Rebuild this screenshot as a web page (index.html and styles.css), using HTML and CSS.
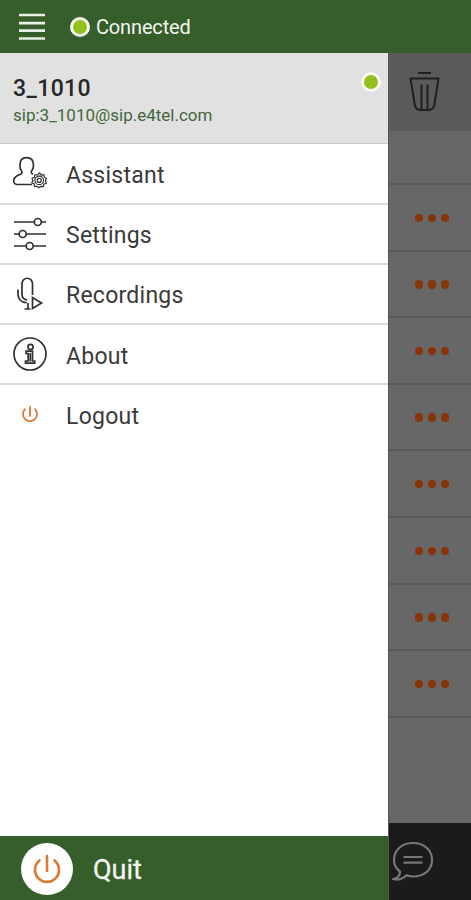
FILE: index.html
```html
<!DOCTYPE html>
<html lang="en">
<head>
<meta charset="utf-8">
<title>Menu</title>
<link rel="stylesheet" href="styles.css">
</head>
<body>
<div class="app">
  <header class="topbar">
    <svg class="burger" width="28" height="28" viewBox="0 0 28 28"><path d="M1 2h26M1 10.200h26M1 17.700h26M1 25.500h26"/></svg>
    <span class="status-dot"></span>
    <span class="status">Connected</span>
  </header>
  <div class="body">
    <aside class="drawer">
      <section class="account">
        <div>
          <h1 class="name">3_1010</h1>
          <p class="address">sip:3_1010@sip.e4tel.com</p>
        </div>
        <span class="presence"></span>
      </section>
      <nav class="menu">
        <a class="item">
          <svg class="icon" width="34" height="34" viewBox="0 0 34 34"><path d="M19 28.500H4C.7 28 0 25.500 1.200 22.700 2.300 20.200 4.500 19.500 7.500 18.200 9 17.500 9.300 16.500 8.600 15 6.900 13.300 6.800 12 6.900 9 7 4.300 9.500 1.700 13.500 1.700s6.900 2.600 7 7.300c.1 3-.4 4.300-1.900 6-.7 1.600-.2 2.600 1.500 3.300"/><path class="fine" d="m26.500 17 1.800 2 2.500-.4.600 2.600 2 1.300-1 2.200 1 2.400-2.500 1-.7 2.500-2.400-.2-1.900 1.400-1.800-1.500-2.500.1-.5-2.400-2.300-1.200 1.200-2.200-1-2.300 2.400-1.100.6-2.400 2.500.2z"/><circle class="fine" cx="26.200" cy="24.400" r="4.300"/><circle class="fine" cx="26.200" cy="24.400" r="2"/></svg>
          <span>Assistant</span>
        </a>
        <a class="item">
          <svg class="icon" width="34" height="34" viewBox="0 0 34 34"><path d="M1 5h20M28.500 5H33M1 17h5M13 17h20M1 29h12.500M20.500 29H33"/><circle cx="24.800" cy="5" r="3.500"/><circle cx="9.700" cy="17" r="3.500"/><circle cx="16.700" cy="29" r="3.500"/></svg>
          <span>Settings</span>
        </a>
        <a class="item">
          <svg class="icon" width="34" height="34" viewBox="0 0 34 34"><path d="M19.500 18V6.500a5 5 0 0 0-10.500 0v11c0 3 2 5 5.200 5.500"/><path d="M5 12.500V17c0 5 3.200 8.500 8.700 8.700M15 26v6M11.500 32h6M19.500 20.500v11l9-5.500z"/></svg>
          <span>Recordings</span>
        </a>
        <a class="item">
          <svg class="icon" width="34" height="34" viewBox="0 0 34 34"><circle cx="17" cy="17" r="16"/><circle cx="17.500" cy="10" r="2.600"/><path d="M13 14.200h6.500V24h2.200v2.200H12.500V24h2.700v-7.500H13zM17.300 16v8.500"/></svg>
          <span>About</span>
        </a>
        <a class="item">
          <svg class="icon power" width="34" height="34" viewBox="0 0 34 34"><path d="M17 9v9M12 11.200a7 7 0 1 0 10 0"/></svg>
          <span>Logout</span>
        </a>
      </nav>
      <footer class="quit">
        <span class="quit-badge"><svg class="power" width="30" height="30" viewBox="0 0 30 30"><path d="M15 2v15M7.500 6.500a12 12 0 1 0 15 0"/></svg></span>
        <span class="quit-label">Quit</span>
      </footer>
    </aside>
    <main class="history">
      <div class="tools">
        <svg width="32" height="42" viewBox="0 0 32 42"><path d="M10 2h13M2.500 7.500h28L26.300 34c-.7 3.300-3 5-6 5h-7.500c-3 0-5.400-1.700-6-5zM13.500 13.500V38M19.500 13.500V38"/></svg>
      </div>
      <div class="tabs"></div>
      <div class="call"><i></i><i></i><i></i></div>
      <div class="call"><i></i><i></i><i></i></div>
      <div class="call"><i></i><i></i><i></i></div>
      <div class="call"><i></i><i></i><i></i></div>
      <div class="call"><i></i><i></i><i></i></div>
      <div class="call"><i></i><i></i><i></i></div>
      <div class="call"><i></i><i></i><i></i></div>
      <div class="call"><i></i><i></i><i></i></div>
      <div class="bottom">
        <svg width="42" height="42" viewBox="0 0 42 42"><path d="M8 31.500C4 28.500 2 24.500 2 20 2 10 10 3 21 3s19 7 19 17-8 16.500-19 16.500c-2.500 0-4.500-.4-6.500-1.200C11.500 38.800 6 40.500 1.500 39 6 38 8 35.500 8 31.500zM11.500 17h19M11.500 22.700h19"/></svg>
      </div>
    </main>
  </div>
</div>
</body>
</html>
```

FILE: styles.css
```css
* { box-sizing: border-box; }
body { margin: 0; font-family: Roboto, sans-serif; }
svg { display: block; fill: none; flex: none; }
.app { display: flex; flex-direction: column; width: 471px; height: 900px; overflow: hidden; }
.topbar { display: flex; align-items: center; height: 53px; flex: none; padding: 0 18px; background: #365e2b; color: #f2f5f0; }
.burger { stroke: #e9efe6; stroke-width: 2.700; }
.status-dot { width: 20px; height: 20px; margin: 1px 6.500px 0 23.500px; border: 3px solid #f4f7ee; border-radius: 50%; background: #93c01f; }
.status { padding-top: 1px; font-size: 20px; letter-spacing: -.15px; }
.body { display: flex; flex: 1; min-height: 0; }
.drawer { display: flex; flex-direction: column; width: 388px; background: #fff; }
.account { display: flex; justify-content: space-between; height: 91px; padding: 20px 7px 0 13px; background: #e1e1e1; border-bottom: 1px solid #c9c9c9; }
.name { margin: 0; font-size: 23px; line-height: 31px; font-weight: 500; letter-spacing: .4px; color: #272727; }
.address { margin: 0; font-size: 17px; line-height: 22px; color: #45663c; }
.presence { width: 20px; height: 20px; margin-top: -1px; border: 3px solid #fafcf4; border-radius: 50%; background: #93c01f; }
.menu { flex: 1; padding-top: .4px; }
.item { display: flex; align-items: center; gap: 19px; height: 60.200px; padding-left: 13px; border-bottom: 2px solid #dadada; font-size: 23px; letter-spacing: .25px; color: #3a3a3a; }
.item:last-child { border-bottom: 0; }
.item span { padding-top: 4px; }
.item:last-child span { padding-top: 2px; }
.icon { stroke: #303030; stroke-width: 1.700; }
.icon .fine { stroke-width: 1.200; }
.power { stroke: #dc7735; stroke-width: 1.800; stroke-linecap: round; }
.quit { display: flex; align-items: center; gap: 20px; height: 64px; padding-left: 21px; background: #365e2b; color: #f2f5f0; font-size: 27px; }
.quit-label { padding-top: 3px; -webkit-text-stroke: .3px #f2f5f0; }
.quit-badge { display: grid; place-items: center; width: 52px; height: 52px; margin-top: 1px; border-radius: 50%; background: #fff; }
.quit-badge .power { stroke-width: 2.600; }
.history { display: flex; flex-direction: column; width: 83px; background: #676767; border-left: 1px solid #545454; }
.tools { height: 78px; padding: 18px 0 0 19px; background: #5a5a5a; }
.tools svg { stroke: #202020; stroke-width: 2; }
.tabs { height: 54px; border-bottom: 2px solid #595959; }
.call { display: flex; align-items: center; gap: 4.600px; height: 66.600px; padding: 1px 0 0 26px; border-bottom: 2px solid #595959; }
.call i { width: 8.400px; height: 8.400px; border-radius: 50%; background: #873407; }
.bottom { height: 77px; margin-top: auto; padding: 17px 0 0 3px; background: #1b1b1b; }
.bottom svg { stroke: #777; stroke-width: 2.200; }
```
